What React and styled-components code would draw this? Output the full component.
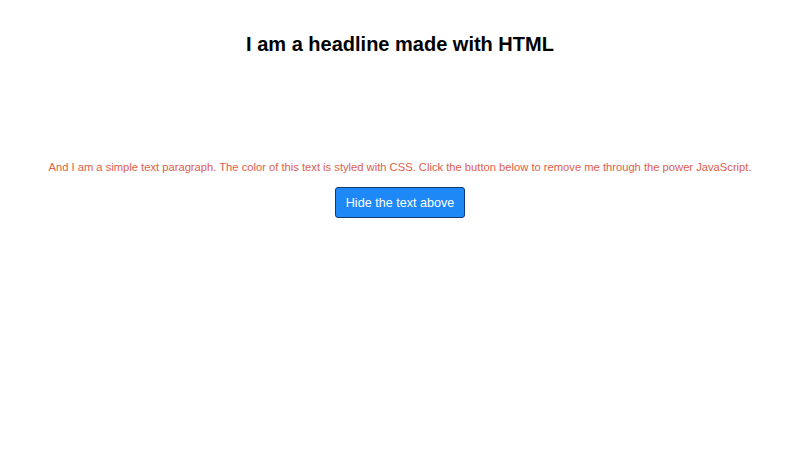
import React, { useState } from 'react';
import styled, { createGlobalStyle } from 'styled-components';

const GlobalStyle = createGlobalStyle`
  body {
    margin: 0;
    background: #ffffff;
    font-family: "Liberation Sans", Arial, sans-serif;
  }
`;

const Page = styled.div`
  display: flex;
  flex-direction: column;
  align-items: center;
  padding-top: 33px;
  text-align: center;
`;

const Headline = styled.h1`
  margin: 0;
  font-size: 20px;
  line-height: 23px;
  font-weight: 700;
  color: #000000;
`;

const Paragraph = styled.p`
  margin: 105px 0 0;
  font-size: 11.2px;
  line-height: 13px;
  color: #e0604a;
`;

const HideButton = styled.button`
  margin-top: 13px;
  height: 31px;
  padding: 0 10px;
  font-family: "Liberation Sans", Arial, sans-serif;
  font-size: 12.6px;
  color: #ffffff;
  background: #1e88f7;
  border: 1px solid #123a6e;
  border-radius: 3px;
  cursor: pointer;
`;

const App = () => {
  const [hidden, setHidden] = useState(false);
  return (
    <Page>
      <GlobalStyle />
      <Headline>I am a headline made with HTML</Headline>
      <Paragraph style={{ visibility: hidden ? 'hidden' : 'visible' }}>
        And I am a simple text paragraph. The color of this text is styled with CSS. Click the button below to remove me through the power JavaScript.
      </Paragraph>
      <HideButton onClick={() => setHidden(true)}>Hide the text above</HideButton>
    </Page>
  );
};

export default App;
